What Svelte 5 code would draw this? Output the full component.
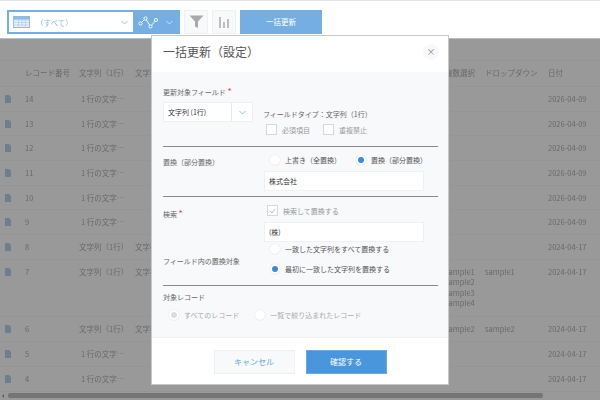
<script>
  const rows = [
    { no: 14, text: "1 行の文字…", date: "2026-04-09" },
    { no: 13, text: "1 行の文字…", date: "2026-04-09" },
    { no: 12, text: "1 行の文字…", date: "2026-04-09" },
    { no: 11, text: "1 行の文字…", date: "2026-04-09" },
    { no: 10, text: "1 行の文字…", date: "2026-04-09" },
    { no: 9, text: "1 行の文字…", date: "2026-04-09" },
    { no: 8, text: "文字列（1行）", text2: "文字列", date: "2024-04-17" },
    { no: 7, text: "文字列（1行）", text2: "文字列", multi: ["sample1", "sample2", "sample3", "sample4"], drop: "sample1", date: "2024-04-17" },
    { no: 6, text: "文字列（1行）", text2: "文字列", multi: ["sample2"], drop: "sample2", date: "2024-04-17" },
    { no: 5, text: "1 行の文字…", date: "2024-04-17" },
    { no: 4, text: "1 行の文字…", date: "2024-04-17" },
  ];
</script>

<div class="page">
  <div class="toolbar">
    <div class="viewbox">
      <div class="viewselect">
        <svg class="gridicon" width="17" height="12" viewBox="0 0 17 12">
          <rect x="0.5" y="0.5" width="16" height="11" fill="#eaf3fb" stroke="#8fbbe3" />
          <path d="M0 4h17M0 6.5h17M0 9h17M5.5 0v12M9 0v12M12.5 0v12" stroke="#a9cbea" stroke-width="0.7" />
          <rect x="0.5" y="0.5" width="16" height="3" fill="#8fbbe3" />
        </svg>
        <span class="viewname">（すべて）</span>
        <svg class="chev" width="7" height="5" viewBox="0 0 7 5"><path d="M0.5 1l3 3 3-3" fill="none" stroke="#9cc3e6" /></svg>
      </div>
      <div class="graphbtn">
        <svg width="21" height="13" viewBox="0 0 21 13">
          <path d="M2.5 7.5L7.5 2.5L12.5 10.5L18 4" fill="none" stroke="#fff" stroke-width="0.9" />
          <g fill="#74aee2" stroke="#fff" stroke-width="0.9">
            <circle cx="2.5" cy="7.5" r="1.6" /><circle cx="7.5" cy="2.5" r="1.6" /><circle cx="12.5" cy="10.5" r="1.6" /><circle cx="18" cy="4" r="1.6" />
          </g>
        </svg>
        <svg class="chev" width="7" height="5" viewBox="0 0 7 5"><path d="M0.5 1l3 3 3-3" fill="none" stroke="#cfe2f4" /></svg>
      </div>
    </div>
    <div class="toolbtn">
      <svg width="15" height="14" viewBox="0 0 15 14"><path d="M0.5 0.5h14L9 6.5V13L6 11.5V6.5z" fill="#a9a9a9" /></svg>
    </div>
    <div class="toolbtn">
      <svg width="10" height="12" viewBox="0 0 10 12"><path d="M0 1h2v11H0zM4 6h2v6H4zM8 3h2v9H8z" fill="#bdbdbd" /></svg>
    </div>
    <div class="bulkbtn">一括更新</div>
  </div>

  <div class="list">
    <div class="row head">
      <span></span><span>レコード番号</span><span>文字列（1行）</span><span>文字列</span><span></span><span></span><span class="multi">複数選択</span><span>ドロップダウン</span><span>日付</span>
    </div>
    {#each rows as r}
      <div class="row">
        <svg class="doc" width="6" height="8" viewBox="0 0 6 8"><path d="M0 0h4l2 2v6H0z" fill="#b4d2ee" /></svg>
        <span>{r.no}</span>
        <span class:txt={!r.text2}>{r.text}</span>
        <span>{r.text2 ?? ""}</span>
        <span></span><span></span>
        <span class="multi">{#each r.multi ?? [] as m}<div>{m}</div>{/each}</span>
        <span>{r.drop ?? ""}</span>
        <span>{r.date}</span>
      </div>
    {/each}
    <div class="scrollbar"><i class="arrow"></i><div class="thumb"></div></div>
  </div>

  <div class="dim"></div>

  <div class="modal">
    <div class="mhead">
      <h2>一括更新（設定）</h2>
      <div class="close">×</div>
    </div>
    <div class="mbody">
      <div class="block first">
        <div class="label">更新対象フィールド <b>*</b></div>
        <div class="fieldrow">
          <div class="select"><span>文字列 (1行)</span><em><svg width="7" height="5" viewBox="0 0 7 5"><path d="M0.5 1l3 3 3-3" fill="none" stroke="#8dbbe5" /></svg></em></div>
          <div class="fieldinfo">
            <div class="ftype">フィールドタイプ：文字列（1行）</div>
            <div class="checks">
              <label><i class="box"></i>必須項目</label>
              <label><i class="box"></i>重複禁止</label>
            </div>
          </div>
        </div>
      </div>

      <div class="block two">
        <div class="label side">置換（部分置換）</div>
        <div class="right">
          <div class="radios top">
            <label class="dark"><i class="radio"></i>上書き（全置換）</label>
            <label class="dark"><i class="radio on"></i>置換（部分置換）</label>
          </div>
          <div class="input">株式会社</div>
        </div>
      </div>

      <div class="block search">
        <div class="two">
          <div class="label">検索 <b>*</b></div>
          <div class="right">
            <label class="searchcheck"><i class="box checked"><svg width="7" height="6" viewBox="0 0 7 6"><path d="M1 3l2 2 3-4" fill="none" stroke="#bbb" /></svg></i>検索して置換する</label>
            <div class="input">(株)</div>
          </div>
        </div>
        <div class="two target">
          <div class="label">フィールド内の置換対象</div>
          <div class="right stack">
            <label class="dark"><i class="radio"></i>一致した文字列をすべて置換する</label>
            <label class="dark"><i class="radio on"></i>最初に一致した文字列を置換する</label>
          </div>
        </div>
      </div>

      <div class="block last">
        <div class="label">対象レコード</div>
        <div class="radios rec">
          <label><i class="radio grey"></i>すべてのレコード</label>
          <label><i class="radio"></i>一覧で絞り込まれたレコード</label>
        </div>
      </div>
    </div>
    <div class="mfoot">
      <div class="cancel">キャンセル</div>
      <div class="ok">確認する</div>
    </div>
  </div>
</div>

<style>
  :global(body) {
    margin: 0;
    background: #fff;
  }

  .page {
    position: relative;
    width: 600px;
    height: 400px;
    overflow: hidden;
    font-family: "Noto Sans CJK JP", "Noto Sans", sans-serif;
    font-size: 7.5px;
    color: #333;
    filter: blur(0.35px);
  }

  /* ツールバー */
  .toolbar {
    position: relative;
    z-index: 2;
    box-sizing: border-box;
    height: 39px;
    padding: 9px 0 0 7px;
    display: flex;
    gap: 4px;
    align-items: flex-start;
    background: #fff;
    border-top: 1px solid #e3e3e3;
    border-bottom: 1px solid #bbb;
  }

  .viewbox {
    display: flex;
    width: 173px;
    height: 24px;
    box-sizing: border-box;
    padding: 2px;
    background: #74aee2;
  }

  .viewselect {
    flex: 1;
    display: flex;
    align-items: center;
    padding: 0 5px 0 4px;
    background: #fff;
  }

  .viewname {
    flex: 1;
    margin-left: 6px;
    color: #8fb9e0;
  }

  .graphbtn {
    width: 45px;
    display: flex;
    align-items: center;
    justify-content: space-between;
    padding: 0 5px 0 5px;
    box-sizing: border-box;
  }

  .toolbtn {
    width: 24px;
    height: 24px;
    display: flex;
    align-items: center;
    justify-content: center;
    background: #f7f9fa;
    border: 1px solid #eef0f1;
    box-sizing: border-box;
  }

  .bulkbtn {
    width: 82px;
    height: 24px;
    line-height: 24px;
    text-align: center;
    color: #fff;
    background: #74aee2;
  }

  /* 背面の一覧 */
  .list {
    padding-top: 21px;
    color: #b0b0b0;
  }

  .row {
    display: grid;
    grid-template-columns: 25px 54px 56px 155px 75px 80px 40px 63px 60px;
    align-items: start;
    padding: 6px 0;
    line-height: 11.67px;
    border-bottom: 1px solid #f8f8f8;
    box-sizing: border-box;
  }

  .row.head {
    height: 27px;
    padding: 6px 0 0;
    line-height: 12px;
    border-top: 1px solid #f8f8f8;
  }

  .row .multi {
    line-height: 10.5px;
    padding: 1px 0;
    white-space: nowrap;
  }

  .head .multi {
    line-height: 12px;
    padding: 0;
  }

  .txt {
    padding-left: 2px;
  }

  .doc {
    margin: 2px 0 0 5px;
  }

  .scrollbar {
    position: absolute;
    left: 0;
    right: 0;
    top: 393px;
    height: 5px;
    display: flex;
    align-items: center;
  }

  .arrow {
    width: 0;
    height: 0;
    margin-left: 2px;
    border: 2px solid transparent;
    border-right-color: #999;
    border-left: 0;
  }

  .thumb {
    width: 535px;
    height: 5px;
    margin-left: 4px;
    border-radius: 2px;
    background: #c4c4c4;
  }

  .dim {
    position: absolute;
    inset: 39px 0 0 0;
    background: rgba(0, 0, 0, 0.4);
  }

  /* モーダル */
  .modal {
    position: absolute;
    z-index: 3;
    left: 151px;
    top: 35px;
    width: 298px;
    height: 350px;
    box-sizing: border-box;
    display: flex;
    flex-direction: column;
    background: #fff;
    border: 1px solid #c8c8c8;
  }

  .mhead {
    height: 36px;
    flex: none;
    display: flex;
    align-items: center;
    justify-content: space-between;
    padding: 0 9px 5px 11px;
    box-sizing: border-box;
  }

  h2 {
    margin: 0;
    font-size: 12px;
    font-weight: 400;
    color: #555;
  }

  .close {
    width: 16px;
    height: 16px;
    line-height: 15px;
    text-align: center;
    border-radius: 50%;
    background: #f7f9fa;
    color: #888;
    font-size: 9px;
  }

  .mbody {
    flex: 1;
    padding: 0 10px 0 11px;
    background: #f7f9fa;
    border-bottom: 1px solid #eef0f1;
    color: #666;
    font-size: 7px;
  }

  .block {
    border-bottom: 1px solid #888;
  }

  .block.first {
    height: 75px;
    padding-top: 13px;
    box-sizing: border-box;
  }

  .label b {
    color: #e74c3c;
    font-weight: 400;
    font-size: 9px;
  }

  .fieldrow {
    display: flex;
    gap: 10px;
    margin-top: 4px;
  }

  .select {
    width: 90px;
    height: 20px;
    box-sizing: border-box;
    display: flex;
    align-items: center;
    justify-content: space-between;
    padding-left: 4px;
    background: #fff;
    border: 1px solid #eef0f1;
    color: #333;
  }

  .select em {
    width: 20px;
    height: 100%;
    display: flex;
    align-items: center;
    justify-content: center;
    border-left: 1px solid #e6e8ea;
  }

  .fieldinfo {
    padding-top: 7px;
  }

  .ftype {
    line-height: 10px;
  }

  .checks {
    display: flex;
    gap: 13px;
    margin: 5px 0 0 3px;
    color: #999;
  }

  label {
    display: flex;
    align-items: center;
    white-space: nowrap;
  }

  .box {
    width: 9px;
    height: 9px;
    margin-right: 5px;
    display: flex;
    align-items: center;
    justify-content: center;
    background: #fff;
    border: 1px solid #d6d8da;
  }

  .radio {
    width: 10px;
    height: 10px;
    margin-right: 5px;
    border-radius: 50%;
    background: #fff;
    box-shadow: 0 0 0 0.5px #e5e7e9;
    position: relative;
  }

  .radio.on::after,
  .radio.grey::after {
    content: "";
    position: absolute;
    inset: 2px;
    border-radius: 50%;
    background: #3a8bdc;
  }

  .radio.grey::after {
    background: #ddd;
  }

  .two {
    display: flex;
  }

  .block.two {
    height: 50px;
    box-sizing: border-box;
  }

  .block.two .side {
    padding-top: 10px;
  }

  .two > .label {
    width: 101px;
    flex: none;
  }

  .right {
    flex: 1;
  }

  .radios {
    display: flex;
  }

  .radios.top {
    gap: 15px;
    padding: 6px 0 0 6px;
    height: 14px;
  }

  .dark {
    color: #555;
  }

  .input {
    width: 160px;
    height: 20px;
    box-sizing: border-box;
    line-height: 18px;
    margin-top: 4px;
    padding-left: 4px;
    background: #fff;
    border: 1px solid #eef0f1;
    color: #333;
  }

  .block.search {
    height: 89px;
    padding-top: 8px;
    box-sizing: border-box;
  }

  .search .two:first-child .label {
    padding-top: 2px;
  }

  .searchcheck {
    margin-left: 3px;
    height: 11px;
    color: #999;
  }

  .search .input {
    margin-top: 6px;
  }

  .target > .label {
    padding-top: 14px;
  }

  .stack {
    display: flex;
    flex-direction: column;
    gap: 10px;
    padding: 2px 0 0 6px;
  }

  .stack label {
    height: 10px;
  }

  .block.last {
    border: 0;
    padding-top: 6px;
  }

  .rec {
    gap: 16px;
    margin-top: 8px;
    padding-left: 6px;
    color: #aaa;
  }

  .mfoot {
    height: 46px;
    flex: none;
    display: flex;
    justify-content: center;
    gap: 11px;
    padding-top: 12px;
    box-sizing: border-box;
    font-size: 8px;
  }

  .cancel,
  .ok {
    width: 81px;
    height: 24px;
    line-height: 22px;
    text-align: center;
    box-sizing: border-box;
  }

  .cancel {
    color: #6ba6df;
    background: #f7f9fa;
    border: 1px solid #eef0f1;
  }

  .ok {
    color: #fff;
    background: #4a96dc;
    border: 1px solid #6ba9e2;
  }
</style>
